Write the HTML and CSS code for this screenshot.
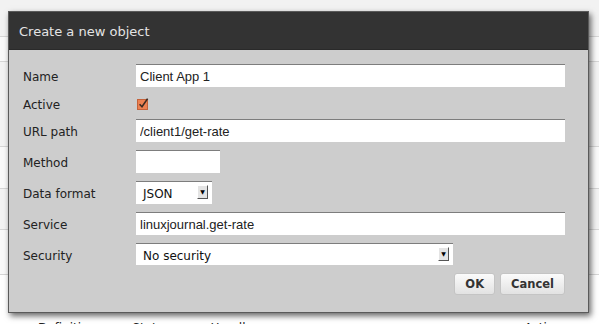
FILE: index.html
```html
<!DOCTYPE html>
<html lang="en">
<head>
    <meta charset="UTF-8">
    <meta name="viewport" content="width=device-width, initial-scale=1.0">
    <title>Create a new object</title>
    <link rel="stylesheet" href="styles.css">
</head>
<body>
    <!-- Page underneath the modal -->
    <div class="page">
        <div class="band band-1"></div>
        <div class="band band-2"></div>
        <div class="band band-3"></div>
        <div class="band band-4"></div>
        <div class="band band-5"></div>
        <div class="band band-6"></div>
        <div class="band band-7"></div>
        <div class="under-row">
            <span class="w1">Definitions</span>
            <span class="w2">Status</span>
            <span class="w3">Handlers</span>
            <span class="w4">Actions</span>
        </div>
    </div>

    <div class="dialog">
        <div class="dialog-title">Create a new object</div>
        <form class="dialog-body" onsubmit="return false;">
            <div class="form-grid">
                <label class="form-label">Name</label>
                <input class="field field-wide" type="text" value="Client App 1">

                <label class="form-label">Active</label>
                <span class="check">
                    <svg width="13" height="13" viewBox="0 0 13 13">
                        <rect x="0.5" y="2.5" width="10" height="10" fill="#ec8152" stroke="#c4623a"/>
                        <path d="M2.6 7.2 L5 9.8 L10.6 1.6" fill="none" stroke="#3a2a22" stroke-width="1.6"/>
                    </svg>
                </span>

                <label class="form-label">URL path</label>
                <input class="field field-wide" type="text" value="/client1/get-rate">

                <label class="form-label">Method</label>
                <input class="field field-short" type="text" value="">

                <label class="form-label">Data format</label>
                <div class="select select-short">
                    <span class="select-value">JSON</span>
                    <span class="select-arrow">&#9660;</span>
                </div>

                <label class="form-label">Service</label>
                <input class="field field-wide" type="text" value="linuxjournal.get-rate">

                <label class="form-label">Security</label>
                <div class="select select-long">
                    <span class="select-value">No security</span>
                    <span class="select-arrow">&#9660;</span>
                </div>
            </div>

            <div class="actions">
                <button class="dlg-button" type="submit">OK</button>
                <button class="dlg-button" type="button">Cancel</button>
            </div>
        </form>
    </div>
</body>
</html>
```

FILE: styles.css
```css
* {
    margin: 0;
    padding: 0;
    box-sizing: border-box;
}

body {
    width: 599px;
    height: 324px;
    overflow: hidden;
    background-color: #fff;
    font-family: 'DejaVu Sans', sans-serif;
    position: relative;
}

/* Underlying page */
.page {
    display: flex;
    flex-direction: column;
}

.band {
    background-color: #f3f3f3;
    border-bottom: 1px solid #d6d6d6;
}

.band-1 { height: 37px; background-color: #f2f2f2; }
.band-2 { height: 25px; background-color: #fafafa; }
.band-3 { height: 85px; }
.band-4 { height: 42px; background-color: #fafafa; }
.band-5 { height: 41px; }
.band-6 { height: 45px; background-color: #fafafa; }
.band-7 { height: 46px; background-color: #fff; border-bottom: none; }

.under-row {
    display: flex;
    padding-left: 38px;
    font-size: 12px;
    color: #222;
    line-height: 14px;
}

.under-row .w2 { margin-left: 30px; }
.under-row .w3 { margin-left: 40px; }
.under-row .w4 { margin-left: 260px; }

/* Modal dialog */
.dialog {
    position: absolute;
    left: 8px;
    top: 11px;
    width: 581px;
    height: 302px;
    background-color: #cdcdcd;
    border: 1px solid #5a5a5a;
    box-shadow: 2px 3px 6px rgba(0, 0, 0, 0.6);
}

.dialog-title {
    height: 38px;
    background-color: #333;
    color: #e4e4e4;
    font-size: 13px;
    line-height: 39px;
    padding-left: 10px;
    border-bottom: 1px solid #2a2a2a;
}

.dialog-body {
    padding: 14px 23px 0 14px;
}

.form-grid {
    display: grid;
    grid-template-columns: 113px 1fr;
    grid-template-rows: 23px 16px 23px 23px 23px 23px 22px;
    row-gap: 8px;
    align-items: center;
}

.form-label {
    font-size: 12px;
    color: #222;
    padding-top: 3px;
}

.field {
    height: 23px;
    border: none;
    border-top: 1px solid #7d7d7d;
    background-color: #fff;
    font-family: 'Liberation Sans', Arial, sans-serif;
    font-size: 13px;
    color: #222;
    padding: 1px 4px 0 4px;
    outline: none;
}

.field-wide {
    width: 100%;
}

.field-short {
    width: 84px;
}

.check {
    display: flex;
    padding-left: 1px;
    padding-top: 1px;
}

/* Fake select boxes */
.select {
    display: flex;
    align-items: flex-start;
    background-color: #fff;
    border-top: 1px solid #7d7d7d;
    height: 23px;
}

.select-short {
    width: 76px;
}

.select-long {
    width: 317px;
    height: 22px;
}

.select-value {
    flex: 1;
    height: 19px;
    overflow: hidden;
    padding: 5px 0 0 7px;
    font-size: 12px;
    line-height: 14px;
    color: #111;
}

.select-arrow {
    width: 11px;
    height: 14px;
    margin: 3px 4px 0 0;
    background-color: #e4e4e4;
    border-right: 1px solid #555;
    border-bottom: 1px solid #555;
    border-top: 1px solid #fff;
    border-left: 1px solid #fff;
    font-size: 6px;
    line-height: 12px;
    text-align: center;
    color: #000;
}

/* Buttons */
.actions {
    display: flex;
    justify-content: flex-end;
    gap: 5px;
    margin-top: 8px;
}

.dlg-button {
    height: 22px;
    padding: 0 10px;
    border: 1px solid #c4c4c4;
    border-radius: 3px;
    background: linear-gradient(#fbfbfb, #e2e2e2);
    font-family: 'DejaVu Sans', sans-serif;
    font-weight: bold;
    font-size: 11.5px;
    color: #333;
    cursor: pointer;
}

.dlg-button:hover {
    background: linear-gradient(#fff, #eaeaea);
}
```
